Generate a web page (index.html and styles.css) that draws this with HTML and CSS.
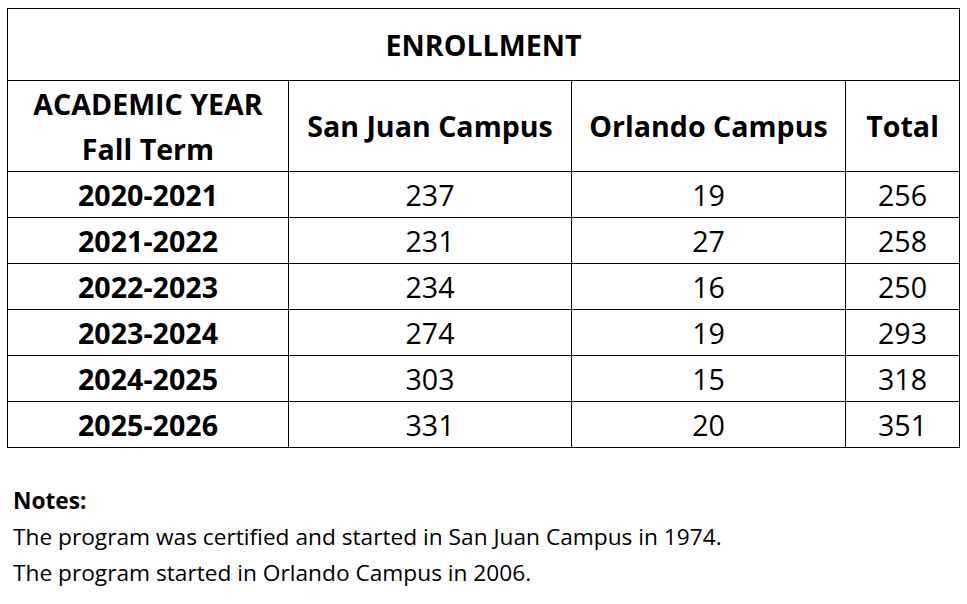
FILE: index.html
```html
<!DOCTYPE html>
<html lang="en">
<head>
<meta charset="utf-8">
<title>Enrollment</title>
<link rel="stylesheet" href="styles.css">
</head>
<body>
<main class="page">
  <table class="enroll">
    <colgroup>
      <col class="c1"><col class="c2"><col class="c3"><col class="c4">
    </colgroup>
    <tr class="title-row"><th colspan="4">ENROLLMENT</th></tr>
    <tr class="head-row">
      <th class="year-head">ACADEMIC YEAR<br>Fall Term</th>
      <th>San Juan Campus</th>
      <th>Orlando Campus</th>
      <th>Total</th>
    </tr>
    <tr class="data-row"><th>2020-2021</th><td>237</td><td>19</td><td>256</td></tr>
    <tr class="data-row"><th>2021-2022</th><td>231</td><td>27</td><td>258</td></tr>
    <tr class="data-row"><th>2022-2023</th><td>234</td><td>16</td><td>250</td></tr>
    <tr class="data-row"><th>2023-2024</th><td>274</td><td>19</td><td>293</td></tr>
    <tr class="data-row"><th>2024-2025</th><td>303</td><td>15</td><td>318</td></tr>
    <tr class="data-row"><th>2025-2026</th><td>331</td><td>20</td><td>351</td></tr>
  </table>
  <section class="notes">
    <p class="notes-title">Notes:</p>
    <p>The program was certified and started in San Juan Campus in 1974.</p>
    <p>The program started in Orlando Campus in 2006.</p>
  </section>
</main>
</body>
</html>
```
FILE: styles.css
```css
html, body {
  margin: 0;
  padding: 0;
  background: #ffffff;
  color: #000000;
  font-family: "Open Sans", "Noto Sans", Lato, sans-serif;
}

.page {
  padding: 8px 0 0 7px;
}

.enroll {
  border-collapse: collapse;
  table-layout: fixed;
  width: 952px;
  font-size: 28.6px;
}

.c1 { width: 281px; }
.c2 { width: 283px; }
.c3 { width: 274px; }
.c4 { width: 114px; }

.enroll th,
.enroll td {
  border: 1px solid #000;
  padding: 0;
  text-align: center;
  vertical-align: middle;
  line-height: 34px;
}

.enroll th { font-weight: 700; }
.enroll td { font-weight: 400; }

.title-row th { height: 71px; }
.head-row th { height: 88px; }
.year-head { line-height: 45px !important; }
.data-row th,
.data-row td { height: 45px; }

.notes {
  margin-top: 35px;
  padding-left: 6px;
  font-size: 22.7px;
  line-height: 36px;
}

.notes p { margin: 0; }
.notes-title { font-weight: 700; }
```
